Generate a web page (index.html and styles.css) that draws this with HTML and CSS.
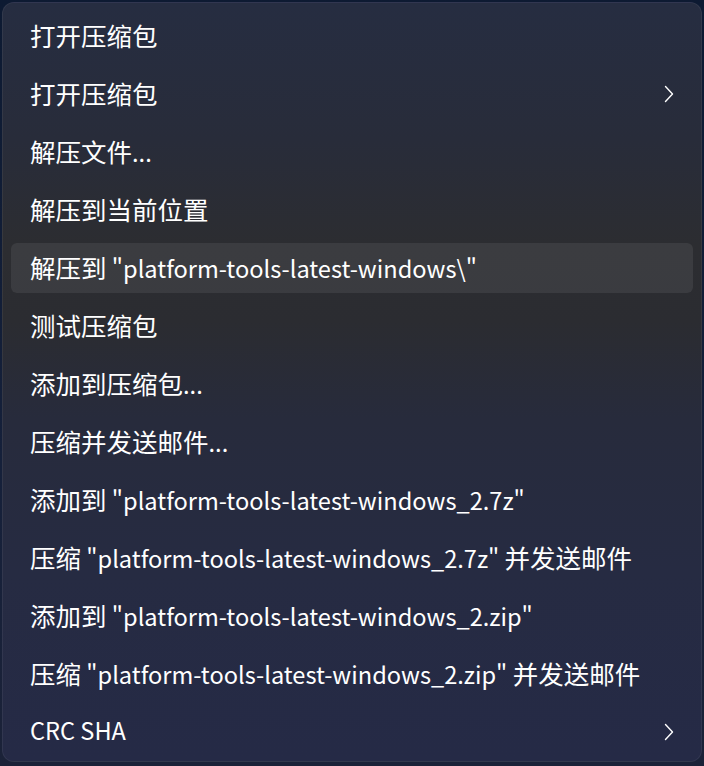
FILE: index.html
```html
<!DOCTYPE html>
<html lang="zh-CN">
<head>
<meta charset="utf-8">
<title>Context menu</title>
<link rel="stylesheet" href="styles.css">
</head>
<body>
<div class="desktop">
  <div class="menu">
    <div class="item"><span class="label"><span class="zh">打开压缩包</span></span></div>
    <div class="item"><span class="label"><span class="zh">打开压缩包</span></span><svg class="chev" viewBox="0 0 10 18" width="10" height="18"><path d="M1.5 1.5 L8.5 9 L1.5 16.5" fill="none" stroke="#fff" stroke-width="1.4" stroke-linecap="round" stroke-linejoin="round"/></svg></div>
    <div class="item"><span class="label"><span class="zh">解压文件</span>...</span></div>
    <div class="item"><span class="label"><span class="zh">解压到当前位置</span></span></div>
    <div class="item hover"><span class="label"><span class="zh">解压到</span> "platform-tools-latest-windows\"</span></div>
    <div class="item"><span class="label"><span class="zh">测试压缩包</span></span></div>
    <div class="item"><span class="label"><span class="zh">添加到压缩包</span>...</span></div>
    <div class="item"><span class="label"><span class="zh">压缩并发送邮件</span>...</span></div>
    <div class="item"><span class="label"><span class="zh">添加到</span> "platform-tools-latest-windows_2.7z"</span></div>
    <div class="item"><span class="label"><span class="zh">压缩</span> "platform-tools-latest-windows_2.7z" <span class="zh">并发送邮件</span></span></div>
    <div class="item"><span class="label"><span class="zh">添加到</span> "platform-tools-latest-windows_2.zip"</span></div>
    <div class="item"><span class="label"><span class="zh">压缩</span> "platform-tools-latest-windows_2.zip" <span class="zh">并发送邮件</span></span></div>
    <div class="item"><span class="label">CRC SHA</span><svg class="chev" viewBox="0 0 10 18" width="10" height="18"><path d="M1.5 1.5 L8.5 9 L1.5 16.5" fill="none" stroke="#fff" stroke-width="1.4" stroke-linecap="round" stroke-linejoin="round"/></svg></div>
  </div>
</div>
</body>
</html>
```

FILE: styles.css
```css
html, body {
  margin: 0;
  padding: 0;
  width: 704px;
  height: 766px;
  overflow: hidden;
  background: #0e1a30;
}

.desktop {
  width: 704px;
  height: 766px;
  padding: 2px 2px 0 2px;
  box-sizing: border-box;
  background: linear-gradient(180deg, #0d1a32 0%, #15203a 60%, #1b2238 100%);
}

.menu {
  width: 700px;
  height: 760px;
  box-sizing: border-box;
  padding: 8px 8px 6px 8px;
  display: flex;
  flex-direction: column;
  gap: 8px;
  border-radius: 12px;
  border: 1px solid rgba(255, 255, 255, 0.06);
  background: linear-gradient(180deg,
    #262d41 0%,
    #282c3a 18%,
    #2c2d31 32%,
    #2b2c31 42%,
    #272b3c 55%,
    #262b42 75%,
    #252a46 100%);
  font-family: "Noto Sans CJK SC", "Noto Sans", sans-serif;
  color: #ffffff;
}

.item {
  height: 50px;
  flex: 0 0 50px;
  display: flex;
  align-items: center;
  justify-content: space-between;
  padding: 0 19px 0 19px;
  border-radius: 6px;
  box-sizing: border-box;
}

.item.hover {
  background: rgba(255, 255, 255, 0.075);
}

.label {
  font-size: 23.6px;
  line-height: 1;
  white-space: nowrap;
  position: relative;
  top: -1px;
}

.zh {
  font-size: 25.5px;
}

.chev {
  display: block;
}
```
